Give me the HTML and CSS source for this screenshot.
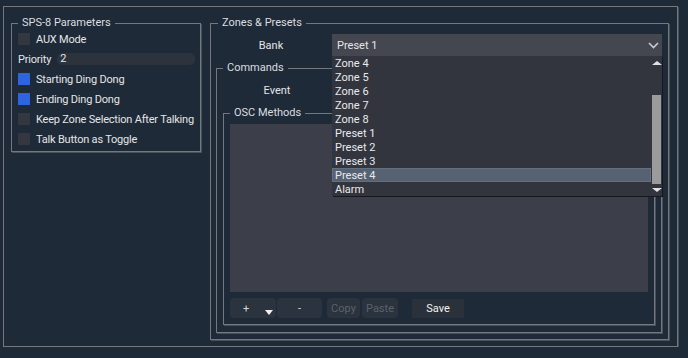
FILE: index.html
```html
<!DOCTYPE html>
<html lang="en">
<head>
    <meta charset="UTF-8">
    <title>SPS-8 Settings</title>
    <link rel="stylesheet" href="styles.css">
</head>
<body>
    <div class="frame">
        <fieldset class="group params">
            <legend>SPS-8 Parameters</legend>
            <div class="row"><span class="check"></span>AUX Mode</div>
            <div class="row">
                <span class="label">Priority</span>
                <span class="field">2</span>
            </div>
            <div class="row"><span class="check on"></span>Starting Ding Dong</div>
            <div class="row"><span class="check on"></span>Ending Ding Dong</div>
            <div class="row"><span class="check"></span>Keep Zone Selection After Talking</div>
            <div class="row"><span class="check"></span>Talk Button as Toggle</div>
        </fieldset>

        <fieldset class="group zones">
            <legend>Zones &amp; Presets</legend>
            <div class="form-row bank">
                <span class="form-label">Bank</span>
                <div class="combo open">
                    <span>Preset 1</span>
                    <svg class="chevron" width="11" height="7" viewBox="0 0 11 7">
                        <polyline points="1,1 5.5,5.5 10,1" fill="none" stroke="#c8cad0" stroke-width="1.6"/>
                    </svg>
                    <div class="popup">
                        <ul class="items">
                            <li>Zone 4</li>
                            <li>Zone 5</li>
                            <li>Zone 6</li>
                            <li>Zone 7</li>
                            <li>Zone 8</li>
                            <li>Preset 1</li>
                            <li>Preset 2</li>
                            <li>Preset 3</li>
                            <li class="selected">Preset 4</li>
                            <li>Alarm</li>
                        </ul>
                        <div class="scrollbar">
                            <span class="arrow up"></span>
                            <div class="track"><span class="thumb"></span></div>
                            <span class="arrow down"></span>
                        </div>
                    </div>
                </div>
            </div>

            <fieldset class="group commands">
                <legend>Commands</legend>
                <div class="form-row">
                    <span class="form-label">Event</span>
                    <!-- event combo sits under the bank popup -->
                    <div class="combo"></div>
                </div>

                <fieldset class="group methods">
                    <legend>OSC Methods</legend>
                    <div class="method-list"></div>
                    <div class="buttons">
                        <button class="btn add">+<span class="caret"></span></button>
                        <button class="btn remove">-</button>
                        <button class="btn small disabled">Copy</button>
                        <button class="btn small paste disabled">Paste</button>
                        <button class="btn save">Save</button>
                    </div>
                </fieldset>
            </fieldset>
        </fieldset>
    </div>
</body>
</html>
```

FILE: styles.css
```css
body {
    margin: 0;
    background: #1e2a37;
    font-family: Roboto, "Noto Sans", sans-serif;
    font-size: 11px;
    color: #e4e5e8;
}

.frame {
    margin: 6px 10px 0 3px;
    height: 341px;
    box-sizing: border-box;
    border: 1px solid #74787e;
    box-shadow: 1px 1px 0 #485058;
    padding: 10px 8px 0 7px;
    display: flex;
    align-items: flex-start;
    gap: 9px;
}

.group {
    margin: 0;
    min-width: 0;
    border: 1px solid #74787e;
    box-shadow: 1px 1px 0 #485058;
    padding: 0 6px;
}

.group legend {
    padding: 0 4px;
    line-height: 12px;
    color: #dcdde0;
}

/* left column */
.params {
    width: 190px;
    box-sizing: border-box;
    padding: 1px 5px 3px 6px;
    display: flex;
    flex-direction: column;
    gap: 2px;
}

.row {
    height: 18px;
    display: flex;
    align-items: center;
    white-space: nowrap;
    letter-spacing: -0.2px;
}

.check {
    width: 12px;
    height: 12px;
    flex: none;
    background: #34373f;
    margin-right: 6px;
}

.check.on {
    background: #2e64e0;
}

.label {
    margin-right: 6px;
}

.field {
    flex: 1;
    height: 12px;
    line-height: 12px;
    padding-left: 3px;
    border-radius: 5px;
    background: #2c333d;
}

/* right column */
.zones {
    flex: 1;
    height: 323px;
    box-sizing: border-box;
    padding: 0 6px 6px 6px;
    display: flex;
    flex-direction: column;
}

.zones > legend {
    margin-left: 1px;
}

.form-row {
    height: 22px;
    display: flex;
    align-items: center;
    margin-top: 5px;
}

.form-label {
    width: 108px;
    text-align: center;
    margin-right: 7px;
}

.combo {
    flex: 1;
    height: 22px;
    position: relative;
    display: flex;
    align-items: center;
    justify-content: space-between;
    padding: 0 3px 0 5px;
    background: #44474f;
}

.chevron {
    margin-top: 1px;
}

.popup {
    position: absolute;
    top: 22px;
    left: 0;
    right: 0;
    height: 140px;
    display: flex;
    background: #32353e;
    box-shadow: 1px 1px 0 #15191f;
    z-index: 2;
}

.items {
    flex: 1;
    margin: 0;
    padding: 0;
    list-style: none;
}

.items li {
    height: 14px;
    line-height: 15px;
    padding-left: 3px;
    color: #e8e9ec;
}

.items li.selected {
    background: #566171;
    box-shadow: inset 0 0 0 1px #646f80;
}

.scrollbar {
    width: 11px;
    display: flex;
    flex-direction: column;
    align-items: center;
}

.arrow {
    width: 0;
    height: 0;
    border-left: 5px solid transparent;
    border-right: 5px solid transparent;
}

.arrow.up {
    margin-top: 5px;
    border-bottom: 4px solid #e0e0e0;
}

.arrow.down {
    margin-bottom: 4px;
    border-top: 4px solid #e0e0e0;
}

.track {
    flex: 1;
    width: 9px;
    padding-top: 30px;
}

.thumb {
    display: block;
    height: 89px;
    background: #9b9b9b;
}

.commands {
    flex: 1;
    margin-top: 6px;
    margin-left: -1px;
    padding: 0 6px 7px 6px;
    display: flex;
    flex-direction: column;
}

.commands .form-row {
    margin-top: 5px;
}

.commands .form-label {
    margin-right: 6px;
}

.methods {
    flex: 1;
    margin-top: 6px;
    padding: 5px 6px 6px 6px;
    display: flex;
    flex-direction: column;
    gap: 6px;
}

.method-list {
    flex: 1;
    background: #3c3e4a;
}

.buttons {
    height: 20px;
    display: flex;
}

.btn {
    height: 20px;
    border: none;
    border-radius: 4px;
    background: #2b333e;
    color: #d6d7da;
    font-family: inherit;
    font-size: 11px;
    padding: 0;
}

.add {
    width: 46px;
    position: relative;
    margin-right: 1px;
    padding-right: 14px;
}

.caret {
    position: absolute;
    right: 3px;
    bottom: 3px;
    border-left: 4px solid transparent;
    border-right: 4px solid transparent;
    border-top: 5px solid #f0f0f0;
}

.remove {
    width: 45px;
    margin-right: 5px;
}

.small {
    width: 33px;
}

.paste {
    width: 36px;
    margin-left: 2px;
}

.disabled {
    color: #5b626b;
}

.save {
    width: 52px;
    margin-left: 14px;
    margin-top: 1px;
    height: 19px;
    border-radius: 0;
    background: #2b313a;
    color: #f2f2f2;
}
```
